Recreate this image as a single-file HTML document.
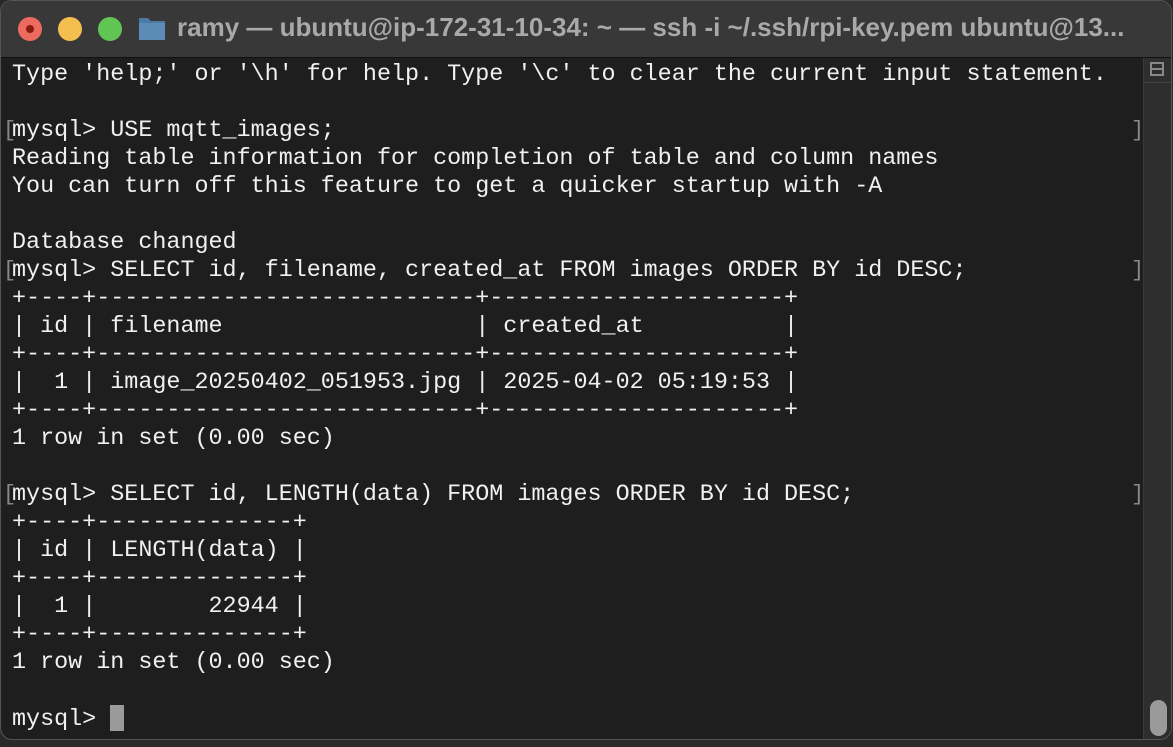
<!DOCTYPE html>
<html><head><meta charset="utf-8"><style>
html,body{margin:0;padding:0;background:#2a2a2a;width:1173px;height:747px;overflow:hidden}
.win{position:absolute;left:0;top:0;width:1172px;height:740px;background:#1e1e1e;border-radius:12px;overflow:hidden;border:1px solid #555;box-sizing:border-box}
.tb{position:absolute;left:0;top:0;right:0;height:56px;background:#383838;border-bottom:1px solid #111}
.dot{position:absolute;top:16px;width:24px;height:24px;border-radius:50%}
.title{position:absolute;left:176px;top:11px;font:bold 26px "Liberation Sans",sans-serif;color:#a9a9a9;white-space:nowrap}
.term{position:absolute;left:11px;top:60px;font:23.4px/28px "Liberation Mono",monospace;color:#f0f0f0;white-space:pre;margin:0}
.sb{position:absolute;left:1142px;top:57px;width:30px;bottom:0;background:#2e2e2e;border-left:1px solid #3a3a3a}
.br{position:absolute;font:22px/28px "Liberation Mono",monospace;color:#888}
.cur{display:inline-block;width:14px;height:26px;background:#9a9a9a;vertical-align:-6px}
</style></head><body>
<div class="win">
<div class="tb">
<div class="dot" style="left:17px;background:#ed6a5e"><div style="position:absolute;left:8px;top:8px;width:8px;height:8px;border-radius:50%;background:#8c1a10"></div></div>
<div class="dot" style="left:57px;background:#f5bf4f"></div>
<div class="dot" style="left:97px;background:#61c554"></div>
<svg style="position:absolute;left:137px;top:14px" width="28" height="26"><path d="M1 3 h9 l3 3 h14 v19 h-26z" fill="#4a7aa5"/><rect x="1" y="8" width="26" height="17" fill="#5b8cb8"/></svg>
<div class="title">ramy — ubuntu@ip-172-31-10-34: ~ — ssh -i ~/.ssh/rpi-key.pem ubuntu@13...</div>
</div>
<div class="sb">
<div style="position:absolute;left:6px;top:4px;width:14px;height:14px;border:2px solid #888;box-sizing:border-box"><div style="position:absolute;left:0;right:0;top:4px;height:2px;background:#888"></div></div>
<div style="position:absolute;left:0;right:0;top:24px;height:1px;background:#444"></div>
<div style="position:absolute;left:6px;top:642px;width:17px;height:36px;border-radius:9px;background:#9a9a9a"></div>
</div>
<pre class="term">Type 'help;' or '\h' for help. Type '\c' to clear the current input statement.

mysql&gt; USE mqtt_images;
Reading table information for completion of table and column names
You can turn off this feature to get a quicker startup with -A

Database changed
mysql&gt; SELECT id, filename, created_at FROM images ORDER BY id DESC;
+----+---------------------------+---------------------+
| id | filename                  | created_at          |
+----+---------------------------+---------------------+
|  1 | image_20250402_051953.jpg | 2025-04-02 05:19:53 |
+----+---------------------------+---------------------+
1 row in set (0.00 sec)

mysql&gt; SELECT id, LENGTH(data) FROM images ORDER BY id DESC;
+----+--------------+
| id | LENGTH(data) |
+----+--------------+
|  1 |        22944 |
+----+--------------+
1 row in set (0.00 sec)

mysql&gt; <span class="cur"></span></pre>
<div class="br" style="left:2px;top:116px">[</div><div class="br" style="left:1130px;top:116px">]</div>
<div class="br" style="left:2px;top:256px">[</div><div class="br" style="left:1130px;top:256px">]</div>
<div class="br" style="left:2px;top:480px">[</div><div class="br" style="left:1130px;top:480px">]</div>
</div>
</body></html>
